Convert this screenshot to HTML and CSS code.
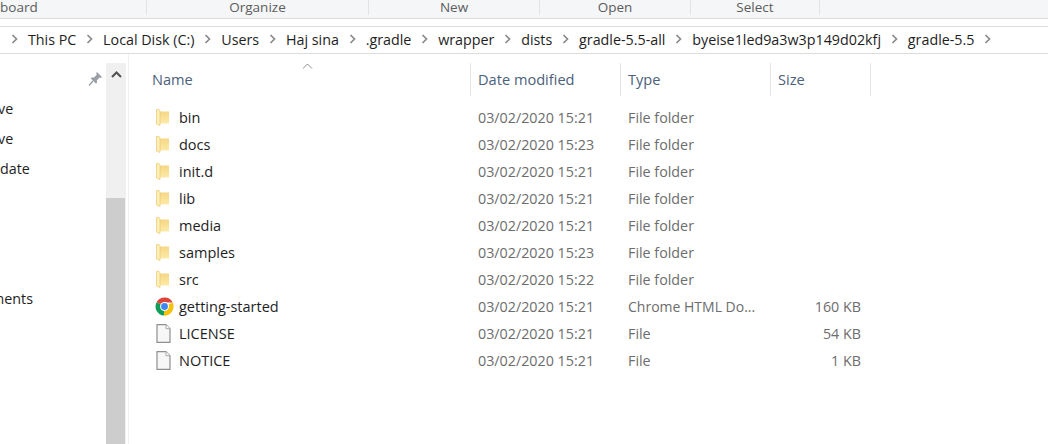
FILE: index.html
```html
<!DOCTYPE html>
<html lang="en">
<head>
    <meta charset="UTF-8">
    <meta name="viewport" content="width=device-width, initial-scale=1.0">
    <title>gradle-5.5</title>
    <link rel="stylesheet" href="styles.css">
</head>
<body>
    <svg class="defs" width="0" height="0">
        <defs>
            <linearGradient id="folderfill" x1="0" y1="0" x2="0" y2="1">
                <stop offset="0" stop-color="#f6d684"/>
                <stop offset="1" stop-color="#fdeaa6"/>
            </linearGradient>
            <symbol id="chev" viewBox="0 0 7 10"><path d="M1.5 1 L5.5 5 L1.5 9" fill="none" stroke="#8a8a8a" stroke-width="1.7"/></symbol>
            <symbol id="folder" viewBox="0 0 13 17">
                <path d="M3 2.5 H13 V14.5 H3 Z" fill="url(#folderfill)"/>
                <path d="M.5 .5 H3 L4 2 V16.5 L.5 15 Z" fill="#fff0bb" stroke="#eccb76" stroke-width=".8"/>
            </symbol>
            <symbol id="file" viewBox="0 0 15 19">
                <path d="M1 .7 H10 L14 4.7 V18.3 H1 Z" fill="#f7f7f7" stroke="#8f8f8f" stroke-width="1.2"/>
                <path d="M10 .7 V4.7 H14" fill="#fff" stroke="#a8a8a8" stroke-width="1"/>
            </symbol>
            <symbol id="chrome" viewBox="0 0 20 20">
                <path d="M10 10 L1.7 5.4 A9.6 9.6 0 0 1 18.6 5.8 H10 Z" fill="#db4437"/>
                <path d="M10 10 L18.6 5.8 A9.6 9.6 0 0 1 9.4 19.6 Z" fill="#f4c20d"/>
                <path d="M10 10 L9.4 19.6 A9.6 9.6 0 0 1 1.7 5.4 Z" fill="#0f9d58"/>
                <circle cx="10" cy="10" r="4.7" fill="#fff"/>
                <circle cx="10" cy="10" r="3.6" fill="#4285f4"/>
            </symbol>
        </defs>
    </svg>

    <div class="ribbon">
        <div class="group group-clip">board</div>
        <div class="group group-organize">Organize</div>
        <div class="group group-new">New</div>
        <div class="group group-open">Open</div>
        <div class="group group-select">Select</div>
    </div>

    <div class="address">
        <svg class="chev"><use href="#chev"/></svg><span>This PC</span>
        <svg class="chev"><use href="#chev"/></svg><span>Local Disk (C:)</span>
        <svg class="chev"><use href="#chev"/></svg><span>Users</span>
        <svg class="chev"><use href="#chev"/></svg><span>Haj sina</span>
        <svg class="chev"><use href="#chev"/></svg><span>.gradle</span>
        <svg class="chev"><use href="#chev"/></svg><span>wrapper</span>
        <svg class="chev"><use href="#chev"/></svg><span>dists</span>
        <svg class="chev"><use href="#chev"/></svg><span>gradle-5.5-all</span>
        <svg class="chev"><use href="#chev"/></svg><span>byeise1led9a3w3p149d02kfj</span>
        <svg class="chev"><use href="#chev"/></svg><span>gradle-5.5</span>
        <svg class="chev"><use href="#chev"/></svg>
    </div>

    <div class="main">
        <div class="sidebar">
            <div class="pin-row">
                <svg class="pin" width="15" height="15" viewBox="0 0 15 15">
                    <path d="M9 1 L14 6 L12.6 7 L11.6 6.6 L8.8 9.4 L9 12 L7.8 12.6 L2.8 7.6 L3.4 6.4 L6 6.6 L8.8 3.8 L8.2 2.2 Z" fill="#9a9fa5"/>
                    <path d="M5 10 L1 14.5" stroke="#9a9fa5" stroke-width="1.4"/>
                </svg>
            </div>
            <div class="nav-item nav-ve">ve</div>
            <div class="nav-item nav-ve">ve</div>
            <div class="nav-item">date</div>
            <div class="nav-item nav-last">ments</div>
        </div>

        <div class="scrollbar">
            <div class="scroll-up">
                <svg width="11" height="7" viewBox="0 0 11 7"><path d="M1 6 L5.5 1.5 L10 6" fill="none" stroke="#505050" stroke-width="2"/></svg>
            </div>
            <div class="thumb"></div>
        </div>

        <div class="files">
            <div class="head">
                <div class="col-name">Name
                    <svg class="sort" width="11" height="6" viewBox="0 0 11 6"><path d="M1 5.5 L5.5 1 L10 5.5" fill="none" stroke="#8b8b8b"/></svg>
                </div>
                <div>Date modified</div>
                <div>Type</div>
                <div>Size</div>
            </div>

            <div class="row"><div class="name"><svg class="ico-folder"><use href="#folder"/></svg>bin</div><div>03/02/2020 15:21</div><div>File folder</div><div class="size"></div></div>
            <div class="row"><div class="name"><svg class="ico-folder"><use href="#folder"/></svg>docs</div><div>03/02/2020 15:23</div><div>File folder</div><div class="size"></div></div>
            <div class="row"><div class="name"><svg class="ico-folder"><use href="#folder"/></svg>init.d</div><div>03/02/2020 15:21</div><div>File folder</div><div class="size"></div></div>
            <div class="row"><div class="name"><svg class="ico-folder"><use href="#folder"/></svg>lib</div><div>03/02/2020 15:21</div><div>File folder</div><div class="size"></div></div>
            <div class="row"><div class="name"><svg class="ico-folder"><use href="#folder"/></svg>media</div><div>03/02/2020 15:21</div><div>File folder</div><div class="size"></div></div>
            <div class="row"><div class="name"><svg class="ico-folder"><use href="#folder"/></svg>samples</div><div>03/02/2020 15:23</div><div>File folder</div><div class="size"></div></div>
            <div class="row"><div class="name"><svg class="ico-folder"><use href="#folder"/></svg>src</div><div>03/02/2020 15:22</div><div>File folder</div><div class="size"></div></div>
            <div class="row"><div class="name"><svg class="ico-chrome"><use href="#chrome"/></svg>getting-started</div><div>03/02/2020 15:21</div><div class="type-long">Chrome HTML Do...</div><div class="size">160 KB</div></div>
            <div class="row"><div class="name"><svg class="ico-file"><use href="#file"/></svg>LICENSE</div><div>03/02/2020 15:21</div><div>File</div><div class="size">54 KB</div></div>
            <div class="row"><div class="name"><svg class="ico-file"><use href="#file"/></svg>NOTICE</div><div>03/02/2020 15:21</div><div>File</div><div class="size">1 KB</div></div>
        </div>
    </div>
</body>
</html>
```

FILE: styles.css
```css
html, body {
    height: 100%;
}

body {
    margin: 0;
    display: flex;
    flex-direction: column;
    overflow: hidden;
    background-color: white;
    color: #1e1e1e;
    font-family: "Open Sans", "Noto Sans", sans-serif;
    font-size: 14.3px;
}

.defs {
    position: absolute;
}

/* ribbon */
.ribbon {
    display: flex;
    flex: none;
    height: 18px;
    background-color: #f5f6f7;
    border-bottom: 1px solid #dadbdc;
    color: #5c5c5c;
    font-size: 13.5px;
    line-height: 15px;
}

.group {
    height: 15px;
    text-align: center;
    border-right: 1px solid #e2e3e4;
    box-sizing: border-box;
}

.group-clip {
    width: 147px;
    text-align: left;
}

.group-organize {
    width: 222px;
}

.group-new {
    width: 171px;
}

.group-open {
    width: 151px;
}

.group-select {
    width: 129px;
}

/* breadcrumb */
.address {
    display: flex;
    flex: none;
    align-items: center;
    gap: 9.9px;
    height: 24px;
    margin-top: 7px;
    padding: 0 0 2px 11px;
    border-top: 1px solid #dcdcdc;
    border-bottom: 1px solid #dcdcdc;
    white-space: nowrap;
}

.chev {
    flex: none;
    width: 7px;
    height: 10px;
}

/* left pane */
.main {
    display: flex;
    flex: 1;
    min-height: 0;
}

.sidebar {
    flex: none;
    width: 106px;
    overflow: hidden;
}

.pin-row {
    display: flex;
    justify-content: flex-end;
    height: 40px;
    padding: 17px 3px 0 0;
    box-sizing: border-box;
}

.nav-item {
    height: 30px;
    line-height: 30px;
}

.nav-ve {
    text-indent: -2px;
}

.nav-last {
    margin-top: 100px;
    text-indent: -9px;
}

.scrollbar {
    display: flex;
    flex: none;
    flex-direction: column;
    width: 20px;
    margin-top: 9px;
    background-color: #f0f0f0;
}

.scroll-up {
    display: flex;
    justify-content: center;
    height: 135px;
    padding-top: 8px;
    box-sizing: border-box;
}

.thumb {
    flex: 1;
    margin-right: 1px;
    background-color: #cdcdcd;
}

/* file list */
.files {
    flex: 1;
    margin-left: 2px;
    padding: 9px 0 0 16px;
    border-left: 1px solid #f0f0f0;
}

.head, .row {
    display: grid;
    grid-template-columns: 326px 150px 150px 100px;
}

.head {
    height: 33px;
    margin-bottom: 8px;
    color: #4c607a;
    font-size: 14.6px;
    line-height: 33px;
}

.head > div {
    position: relative;
    padding-left: 7px;
    border-right: 1px solid #e5e5e5;
}

.sort {
    position: absolute;
    top: 0;
    left: 157px;
}

.row {
    height: 27px;
    color: #6d6d6d;
    line-height: 27px;
}

.row > div {
    padding-left: 7px;
}

.row .name {
    display: flex;
    align-items: center;
    padding-left: 0;
    color: #1e1e1e;
    font-size: 14.5px;
}

.row .size {
    padding-right: 10px;
    text-align: right;
}

.row .type-long {
    font-size: 14px;
}

.ico-folder {
    width: 13px;
    height: 17px;
    margin: -1px 10px 0 11px;
}

.ico-chrome {
    width: 19px;
    height: 19px;
    margin: 0 5px 0 10px;
}

.ico-file {
    width: 15px;
    height: 19px;
    margin: 0 8px 0 11px;
}
```
